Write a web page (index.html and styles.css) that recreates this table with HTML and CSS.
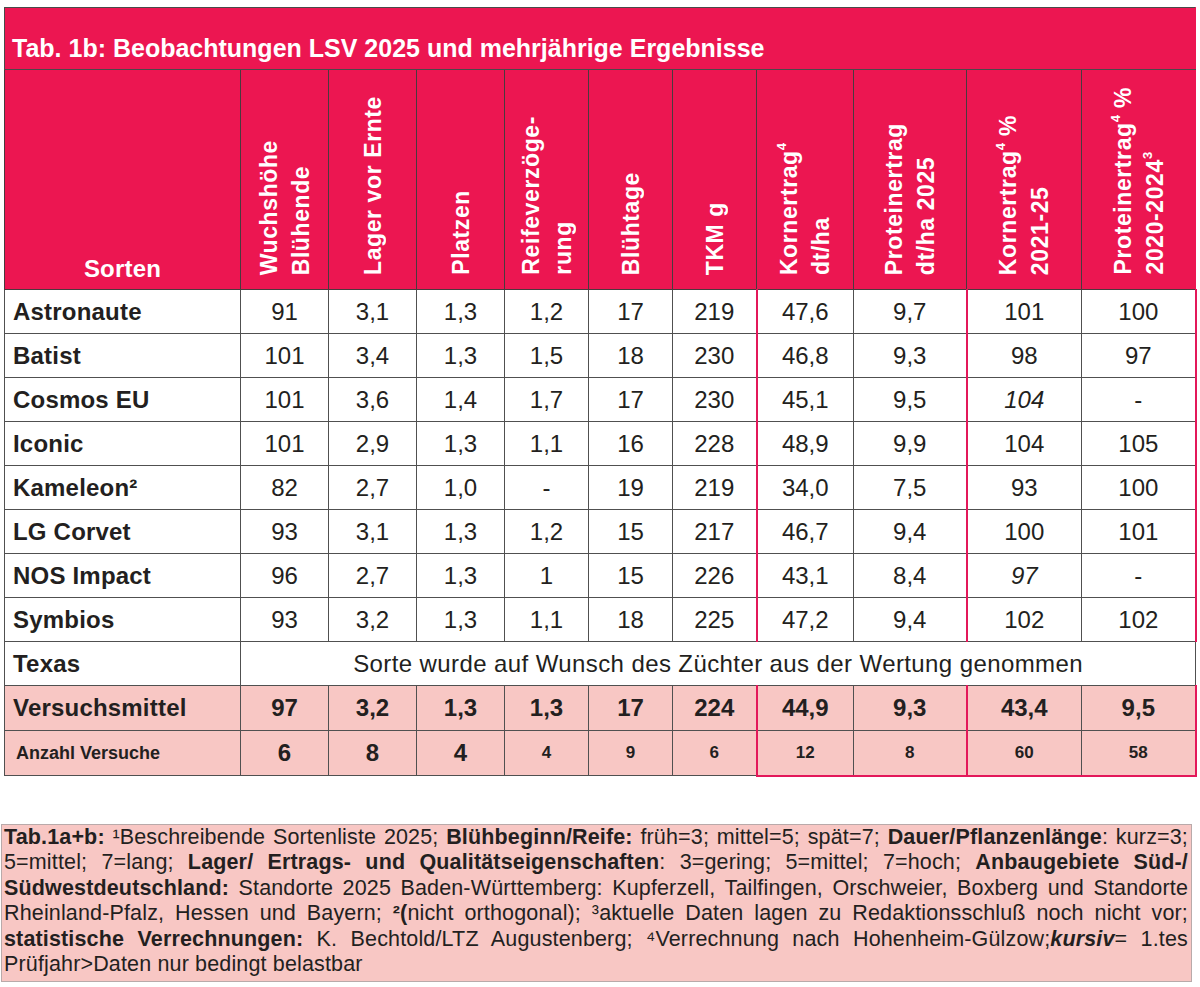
FILE: index.html
```html
<!DOCTYPE html>
<html lang="de">
<head>
<meta charset="utf-8">
<title>Tab. 1b: Beobachtungen LSV 2025</title>
<link rel="stylesheet" href="styles.css">
</head>
<body>
<main class="page">
  <table class="lsv">
    <colgroup>
      <col class="w-name"><col class="w-88"><col class="w-88"><col class="w-88"><col class="w-84"><col class="w-84"><col class="w-84"><col class="w-97"><col class="w-113"><col class="w-115"><col class="w-114">
    </colgroup>
    <thead>
      <tr class="title-row"><th colspan="11">Tab. 1b: Beobachtungen LSV 2025 und mehrjährige Ergebnisse</th></tr>
      <tr class="head-row">
        <th class="h-name">Sorten</th>
        <th><span class="vt">Wuchshöhe<br>Blühende</span></th>
        <th><span class="vt">Lager vor Ernte</span></th>
        <th><span class="vt">Platzen</span></th>
        <th><span class="vt">Reifeverzöge-<br>rung</span></th>
        <th><span class="vt">Blühtage</span></th>
        <th><span class="vt">TKM g</span></th>
        <th class="hk"><span class="vt">Kornertrag<sup>4</sup><br>dt/ha</span></th>
        <th><span class="vt">Proteinertrag<br>dt/ha 2025</span></th>
        <th><span class="vt">Kornertrag<sup>4</sup> %<br>2021-25</span></th>
        <th><span class="vt">Proteinertrag<sup>4</sup> %<br>2020-2024<sup>3</sup></span></th>
      </tr>
    </thead>
    <tbody>
      <tr><th class="name">Astronaute</th><td>91</td><td>3,1</td><td>1,3</td><td>1,2</td><td>17</td><td>219</td><td class="kl">47,6</td><td>9,7</td><td class="kl">101</td><td class="kr">100</td></tr>
      <tr><th class="name">Batist</th><td>101</td><td>3,4</td><td>1,3</td><td>1,5</td><td>18</td><td>230</td><td class="kl">46,8</td><td>9,3</td><td class="kl">98</td><td class="kr">97</td></tr>
      <tr><th class="name">Cosmos EU</th><td>101</td><td>3,6</td><td>1,4</td><td>1,7</td><td>17</td><td>230</td><td class="kl">45,1</td><td>9,5</td><td class="kl"><i>104</i></td><td class="kr">-</td></tr>
      <tr><th class="name">Iconic</th><td>101</td><td>2,9</td><td>1,3</td><td>1,1</td><td>16</td><td>228</td><td class="kl">48,9</td><td>9,9</td><td class="kl">104</td><td class="kr">105</td></tr>
      <tr><th class="name">Kameleon²</th><td>82</td><td>2,7</td><td>1,0</td><td>-</td><td>19</td><td>219</td><td class="kl">34,0</td><td>7,5</td><td class="kl">93</td><td class="kr">100</td></tr>
      <tr><th class="name">LG Corvet</th><td>93</td><td>3,1</td><td>1,3</td><td>1,2</td><td>15</td><td>217</td><td class="kl">46,7</td><td>9,4</td><td class="kl">100</td><td class="kr">101</td></tr>
      <tr><th class="name">NOS Impact</th><td>96</td><td>2,7</td><td>1,3</td><td>1</td><td>15</td><td>226</td><td class="kl">43,1</td><td>8,4</td><td class="kl"><i>97</i></td><td class="kr">-</td></tr>
      <tr><th class="name">Symbios</th><td>93</td><td>3,2</td><td>1,3</td><td>1,1</td><td>18</td><td>225</td><td class="kl">47,2</td><td>9,4</td><td class="kl">102</td><td class="kr">102</td></tr>
      <tr><th class="name">Texas</th><td colspan="10" class="remark">Sorte wurde auf Wunsch des Züchter aus der Wertung genommen</td></tr>
      <tr class="mean"><th class="name">Versuchsmittel</th><td>97</td><td>3,2</td><td>1,3</td><td>1,3</td><td>17</td><td>224</td><td class="kl">44,9</td><td>9,3</td><td class="kl">43,4</td><td class="kr">9,5</td></tr>
      <tr class="count"><th class="name">Anzahl Versuche</th><td class="big">6</td><td class="big">8</td><td class="big">4</td><td>4</td><td>9</td><td>6</td><td class="kl kb">12</td><td class="kb">8</td><td class="kl kb">60</td><td class="kr kb">58</td></tr>
    </tbody>
  </table>

  <p class="note">
    <span class="ln"><b>Tab.1a+b:</b> ¹Beschreibende Sortenliste 2025; <b>Blühbeginn/Reife:</b> früh=3; mittel=5; spät=7; <b>Dauer/Pflanzenlänge</b>: kurz=3;</span>
    <span class="ln">5=mittel; 7=lang; <b>Lager/ Ertrags- und Qualitätseigenschaften</b>: 3=gering; 5=mittel; 7=hoch; <b>Anbaugebiete Süd-/</b></span>
    <span class="ln"><b>Südwestdeutschland:</b> Standorte 2025 Baden-Württemberg: Kupferzell, Tailfingen, Orschweier, Boxberg und Standorte</span>
    <span class="ln">Rheinland-Pfalz, Hessen und Bayern; <b>²(</b>nicht orthogonal); ³aktuelle Daten lagen zu Redaktionsschluß noch nicht vor;</span>
    <span class="ln"><b>statistische Verrechnungen:</b> K. Bechtold/LTZ Augustenberg; ⁴Verrechnung nach Hohenheim-Gülzow;<b><i>kursiv</i></b>= 1.tes</span>
    <span class="ln last">Prüfjahr&gt;Daten nur bedingt belastbar</span>
  </p>
</main>
</body>
</html>
```

FILE: styles.css
```css
* {
  box-sizing: border-box;
}

html, body {
  margin: 0;
  padding: 0;
  background: #ffffff;
}

body {
  font-family: "Liberation Sans", Arial, Helvetica, sans-serif;
  color: #231f20;
}

.page {
  padding: 7px 0 0 0;
}

/* ---------- table ---------- */
.lsv {
  margin-left: 4px;
  width: 1191px;
  border-collapse: collapse;
  table-layout: fixed;
}

.w-name { width: 236px; }
.w-88 { width: 88px; }
.w-84 { width: 84px; }
.w-97 { width: 97px; }
.w-113 { width: 113px; }
.w-115 { width: 115px; }
.w-114 { width: 114px; }

.lsv th,
.lsv td {
  border: 1px solid #505050;
  padding: 0;
}

.title-row th {
  height: 62px;
  background: #ec1651;
  color: #ffffff;
  text-align: left;
  vertical-align: bottom;
  font-size: 25px;
  font-weight: 700;
  line-height: 30px;
  padding: 0 0 6px 7px;
  border-color: #4a4a4a;
  border-right-color: #ec1651;
}

.head-row th {
  height: 220px;
  background: #ec1651;
  color: #ffffff;
  text-align: center;
  vertical-align: bottom;
  padding: 0 0 14px;
  border-color: #4a3a3e;
}

.head-row th:last-child {
  border-right-color: #ec1651;
}

.head-row th.hk {
  border-left-color: #f0708e;
}

.head-row .h-name {
  font-size: 24px;
  font-weight: 700;
  letter-spacing: 0.2px;
  line-height: 26px;
  padding-bottom: 7px;
}

.vt {
  display: inline-block;
  vertical-align: bottom;
  writing-mode: vertical-rl;
  transform: rotate(180deg);
  text-align: start;
  white-space: nowrap;
  font-size: 23px;
  font-weight: 700;
  line-height: 32px;
  letter-spacing: 0.6px;
}

.vt sup {
  font-size: 13px;
  line-height: 0;
  vertical-align: 7px;
  letter-spacing: 0;
}

/* body rows */
.lsv tbody tr {
  height: 44px;
}

.lsv tbody tr.mean,
.lsv tbody tr.count {
  height: 45px;
}

.lsv tbody td {
  text-align: center;
  vertical-align: middle;
  font-size: 24px;
  letter-spacing: 0;
  line-height: 26px;
}

.lsv tbody th.name {
  text-align: left;
  vertical-align: middle;
  padding-left: 8px;
  font-size: 24px;
  font-weight: 700;
  letter-spacing: 0.2px;
  line-height: 26px;
}

.lsv tbody td.remark {
  letter-spacing: 0.4px;
}

.lsv td.kl {
  border-left: 2px solid #e3185a;
}

.lsv td.kr {
  border-right: 2px solid #e3185a;
}

.lsv td.kb {
  border-bottom: 2px solid #e3185a;
}

.mean th,
.mean td,
.count th,
.count td {
  background: #f8c7c4;
}

.mean td {
  font-weight: 700;
}

.lsv tbody .count th.name {
  font-size: 18px;
  letter-spacing: 0;
  padding-left: 11px;
}

.lsv tbody .count td {
  font-size: 17px;
  font-weight: 700;
  letter-spacing: 0;
}

.lsv tbody .count td.big {
  font-size: 24px;
}

/* ---------- footnote ---------- */
.note {
  margin: 47px 0 0 1px;
  width: 1191px;
  height: 158px;
  padding: 0 3px 0 2px;
  background: #f8c7c4;
  border: 1.5px solid #b9aaaa;
  font-size: 21.5px;
  line-height: 25.5px;
  letter-spacing: 0.15px;
  color: #231f20;
}

.note .ln {
  display: block;
  text-align: justify;
  text-align-last: justify;
}

.note .ln.last {
  text-align-last: left;
}
```
